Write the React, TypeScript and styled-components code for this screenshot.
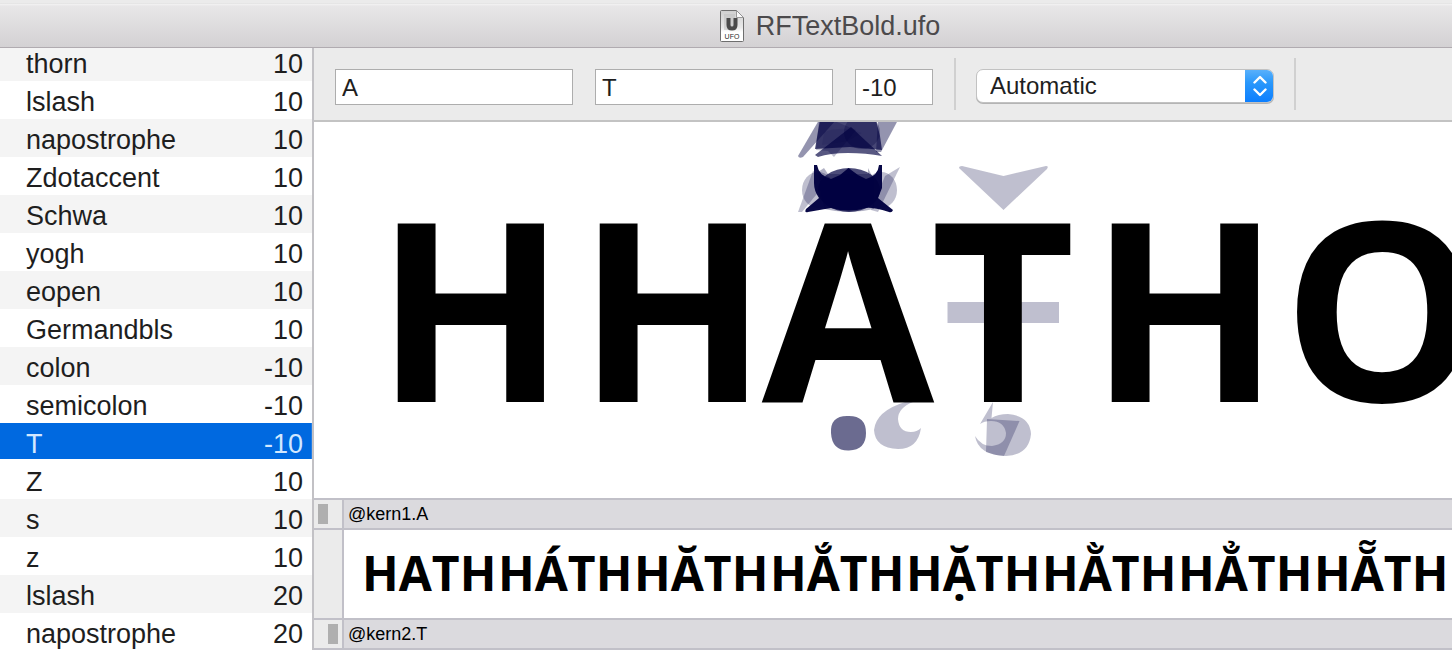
import React from 'react';
import styled, { createGlobalStyle } from 'styled-components';

const GlobalStyle = createGlobalStyle`
  * { box-sizing: border-box; }
  body {
    margin: 0;
    background: #ffffff;
    color: #1e1e1e;
    font-family: "Liberation Sans", Arial, sans-serif;
  }
`;

const line = '#c1c0c8';

const Window = styled.div`
  display: flex;
  flex-direction: column;
  height: 100vh;
  overflow: hidden;
`;

const TitleBar = styled.header`
  display: flex;
  flex: none;
  align-items: center;
  justify-content: center;
  gap: 12px;
  height: 48px;
  padding: 5px 0 0 208px;
  border-bottom: 1px solid #b0abb0;
  background: linear-gradient(#ebebeb 0, #ebebeb 3px, #d8d8d8 3px, #f3f3f3 4px, #e8e7e8 6px, #d3d1d3 100%);
`;

const Title = styled.h1`
  margin: 0;
  color: #4c4a4c;
  font-size: 27px;
  font-weight: 400;
  line-height: 32px;
`;

const Body = styled.div`
  display: flex;
  flex: 1;
  min-height: 0;
`;

const Sidebar = styled.aside`
  flex: none;
  width: 314px;
  overflow: hidden;
  border-right: 2px solid #c2c1c5;
`;

const PairTable = styled.table`
  width: 100%;
  margin-top: -5px;
  border-collapse: collapse;
  font-size: 27px;
  line-height: 34px;
`;

const PairRow = styled.tr<{ $selected?: boolean }>`
  height: 38px;
  background: ${(p) => (p.$selected ? 'linear-gradient(#0069e0 36px, #fff 36px)' : '#ffffff')};
  color: ${(p) => (p.$selected ? '#d3e8ff' : '#1e1e1e')};
  &:nth-child(odd) {
    background: ${(p) => (p.$selected ? 'linear-gradient(#0069e0 36px, #fff 36px)' : '#f4f4f4')};
  }
`;

const PairCell = styled.td`
  padding: 4px 0 0 26px;
`;

const ValueCell = styled.td`
  padding: 4px 9px 0 0;
  text-align: right;
`;

const Main = styled.main`
  display: flex;
  flex: 1;
  flex-direction: column;
  min-width: 0;
`;

const Toolbar = styled.div`
  display: flex;
  flex: none;
  align-items: center;
  gap: 20px;
  height: 74px;
  padding: 0 21px;
  border-bottom: 2px solid #c3c3c3;
  background: #ebebeb;
`;

const Field = styled.input<{ $w: number }>`
  flex: none;
  width: ${(p) => p.$w}px;
  height: 36px;
  padding: 2px 6px 0;
  border: 1px solid #adadad;
  border-radius: 0;
  outline: 0;
  background: #ffffff;
  color: #1e1e1e;
  font-family: inherit;
  font-size: 24px;
`;

const Fields = styled.div`
  display: flex;
  gap: 22px;
  padding-top: 6px;
  padding-right: 1px;
`;

const Divider = styled.div`
  flex: none;
  width: 2px;
  height: 52px;
  background: #d0d0d0;
`;

const SelectBox = styled.div`
  position: relative;
  flex: none;
  width: 298px;
  height: 34px;
  margin-top: 4px;
  overflow: hidden;
  border: 1px solid #c2c2c2;
  border-radius: 7px;
  background: #ffffff;
  box-shadow: 0 1px 0 #b4b4b4;
`;

const Select = styled.select`
  width: 100%;
  height: 32px;
  padding: 0 40px 0 13px;
  border: 0;
  outline: 0;
  appearance: none;
  background: transparent;
  color: #1e1e1e;
  font-family: inherit;
  font-size: 24px;
  line-height: 32px;
`;

const SelectArrows = styled.span`
  position: absolute;
  top: -1px;
  right: -1px;
  display: flex;
  align-items: center;
  justify-content: center;
  width: 29px;
  height: 34px;
  background: linear-gradient(#5cb2fb, #2a98fb 40%, #0a7dff);
  pointer-events: none;
`;

const Canvas = styled.section`
  position: relative;
  flex: 1;
  min-height: 0;
  overflow: hidden;
  padding: 13px 0 0 56px;
  background: #ffffff;
`;

const Marks = styled.svg`
  position: absolute;
  top: 0;
  left: 0;
`;

const GlyphLine = styled.div`
  position: relative;
  display: flex;
  color: #000000;
  font-family: "Open Sans", sans-serif;
  font-size: 250px;
  font-weight: 700;
  line-height: 340px;
`;

const GlyphCell = styled.span<{ $w: number }>`
  display: flex;
  flex: none;
  justify-content: center;
  width: ${(p) => p.$w}px;
`;

const Groups = styled.section`
  flex: none;
  border-bottom: 2px solid ${line};
`;

const GroupRow = styled.div<{ $h: number; $fill: string }>`
  display: grid;
  grid-template-columns: 30px minmax(0, 1fr);
  height: ${(p) => p.$h}px;
  border-top: 2px solid ${line};
  background: ${(p) => p.$fill};
`;

const Gutter = styled.div<{ $side?: 'start' | 'end' }>`
  display: flex;
  align-items: center;
  justify-content: flex-${(p) => p.$side ?? 'start'};
  padding: 0 4px;
  border-right: 2px solid ${line};
  background: #ebebeb;
`;

const SideMarker = styled.span`
  width: 10px;
  height: 20px;
  background: #afafaf;
`;

const GroupName = styled.h2`
  margin: 0;
  padding-left: 4px;
  color: #000000;
  font-size: 18px;
  font-weight: 400;
  line-height: 28px;
`;

const Words = styled.div`
  display: flex;
  overflow: hidden;
  padding-left: 18px;
  color: #000000;
  font-family: "Open Sans", sans-serif;
  font-size: 48px;
  font-weight: 700;
  font-kerning: none;
  line-height: 86px;
`;

const Word = styled.span`
  flex: none;
  width: 136px;
  white-space: nowrap;
`;

const pairs: [string, number][] = [
  ['thorn', 10], ['lslash', 10], ['napostrophe', 10], ['Zdotaccent', 10],
  ['Schwa', 10], ['yogh', 10], ['eopen', 10], ['Germandbls', 10],
  ['colon', -10], ['semicolon', -10], ['T', -10], ['Z', 10],
  ['s', 10], ['z', 10], ['lslash', 20], ['napostrophe', 20],
];
const selectedPair = 10;

const glyphs: [string, number][] = [
  ['H', 202], ['H', 202], ['A', 148], ['T', 162], ['H', 202], ['O', 192],
];

const words = ['HATH', 'HÁTH', 'HĂTH', 'HẮTH', 'HẶTH', 'HẰTH', 'HẲTH', 'HẴTH'];

function UfoIcon() {
  return (
    <svg width="24" height="32" viewBox="0 0 24 32" aria-hidden="true">
      <defs>
        <linearGradient id="sheet" x1="0" y1="0" x2="0" y2="1">
          <stop offset="0" stopColor="#cfcfcf" />
          <stop offset="0.55" stopColor="#e9e9e9" />
          <stop offset="0.7" stopColor="#ffffff" />
        </linearGradient>
      </defs>
      <path d="M.5 1.5Q.5.5 1.500.5H16.500L23.500 8V30.500Q23.500 31.500 22.500 31.500H1.500Q.5 31.500.5 30.500Z" fill="url(#sheet)" stroke="#6e6e6e" />
      <path d="M4 4H15V20H4Z" fill="#bdbdbd" opacity=".5" />
      <path d="M16.500.5V7.500H23.500Z" fill="#fafafa" stroke="#858585" strokeWidth=".8" />
      <path d="M8.500 8V15Q8.500 18.500 12 18.500T15.500 15V8" fill="none" stroke="#4b4b4b" strokeWidth="4" />
      <text x="12" y="28.500" textAnchor="middle" fontFamily="Liberation Sans, sans-serif" fontSize="7" fill="#2a2a2a">UFO</text>
    </svg>
  );
}

function AccentMarks() {
  return (
    <Marks width="1138" height="376" viewBox="314 122 1138 376" fill="#000040" fillOpacity=".25" aria-hidden="true">
      {/* upper stack of accents over A */}
      <path d="M798 156L819 120H836L803 157Q799 159 798 156Z" fillOpacity=".42" />
      <path d="M898 120H878L876 152L881 152Z" fillOpacity=".42" />
      <path d="M820 120H876L880 136L882 150L850 147L815 149Z" fillOpacity=".72" />
      <path d="M815 155L851 127L882 156Q866 153 848 153Q830 153 818 157Z" fillOpacity=".66" />
      <path d="M816 150L819 120H832L856 130L834 157L828 151Z" fillOpacity=".25" />
      <path d="M824 132Q842 125 862 133L848 141L822 145Z" fillOpacity=".1" />
      <ellipse cx="862" cy="132" rx="18" ry="17" fillOpacity=".3" />
      {/* lower stack of accents over A */}
      <ellipse cx="818" cy="190" rx="16" ry="18" />
      <ellipse cx="881" cy="190" rx="16" ry="18" />
      <path d="M798 212L813 171L830 178L802 212Z" />
      <path d="M900 167L885 176L871 210L878 212Z" />
      <ellipse cx="849" cy="190" rx="31" ry="22" fillOpacity=".7" />
      <path d="M818 172L824 168L828 174L868 174L868 168L874 180V209Q849 215 824 209Z" fillOpacity=".3" />
      <path d="M814 165H817Q819 176 831 179L840 175L848.500 168L858 175L866 179Q878 176 879 165H882V188L878 198L893 210Q892 213 889 212Q872 207 866 208Q848 213 831 208L808 212Q804 213 806 209L819 198Q814 191 814 183Z" fillOpacity=".97" />
      {/* caron and bar on T */}
      <path d="M959 168Q959 166 962 166L1003.500 176L1046 166Q1049 166 1047 169L1003.500 210Z" />
      <path d="M947.500 302H1059V323H947.500Z" />
      {/* dot and ogonek under A */}
      <path d="M849 416Q866 416 866 433T849 450.500T831 433T849 416Z" fillOpacity=".58" />
      <path d="M913 402Q898 408 898 419Q899 432 911 432Q917 432 921 428Q918 449 898 449Q875 448 874 430Q876 411 905 402Z" />
      {/* cedilla and comma under T */}
      <path d="M993 402L991.500 418Q998 414 1008 414Q1030 416 1031 434Q1029 455 1006 456Q978 455 975 436Q981 446 992 446Q1006 444 1006 433Q1004 421 991 421Q984 421 980 424Z" />
      <path d="M987 419L1019.500 421L1004 456Q994 455 986 452Z" />
    </Marks>
  );
}

export default function App() {
  return (
    <Window>
      <GlobalStyle />
      <TitleBar>
        <UfoIcon />
        <Title>RFTextBold.ufo</Title>
      </TitleBar>
      <Body>
        <Sidebar>
          <PairTable>
            <tbody>
              {pairs.map(([name, value], i) => (
                <PairRow key={i} $selected={i === selectedPair}>
                  <PairCell>{name}</PairCell>
                  <ValueCell>{value}</ValueCell>
                </PairRow>
              ))}
            </tbody>
          </PairTable>
        </Sidebar>
        <Main>
          <Toolbar>
            <Fields>
              <Field $w={238} aria-label="First glyph" defaultValue="A" />
              <Field $w={238} aria-label="Second glyph" defaultValue="T" />
              <Field $w={78} aria-label="Kerning value" defaultValue="-10" />
            </Fields>
            <Divider />
            <SelectBox>
              <Select aria-label="Kerning mode" defaultValue="Automatic">
                <option>Automatic</option>
              </Select>
              <SelectArrows>
                <svg width="14" height="22" viewBox="0 0 14 22" fill="none" stroke="#ffffff" strokeWidth="2.400" strokeLinecap="round" strokeLinejoin="round" aria-hidden="true">
                  <path d="M1.500 7.500L7 2L12.500 7.500M1.500 14.500L7 20L12.500 14.500" />
                </svg>
              </SelectArrows>
            </SelectBox>
            <Divider />
          </Toolbar>
          <Canvas>
            <AccentMarks />
            <GlyphLine>
              {glyphs.map(([glyph, width], i) => (
                <GlyphCell key={i} $w={width}>{glyph}</GlyphCell>
              ))}
            </GlyphLine>
          </Canvas>
          <Groups>
            <GroupRow $h={30} $fill="#dbdade">
              <Gutter><SideMarker /></Gutter>
              <GroupName>@kern1.A</GroupName>
            </GroupRow>
            <GroupRow $h={90} $fill="#ffffff">
              <Gutter />
              <Words>
                {words.map((word) => <Word key={word}>{word}</Word>)}
              </Words>
            </GroupRow>
            <GroupRow $h={30} $fill="#dbdade">
              <Gutter $side="end"><SideMarker /></Gutter>
              <GroupName>@kern2.T</GroupName>
            </GroupRow>
          </Groups>
        </Main>
      </Body>
    </Window>
  );
}
